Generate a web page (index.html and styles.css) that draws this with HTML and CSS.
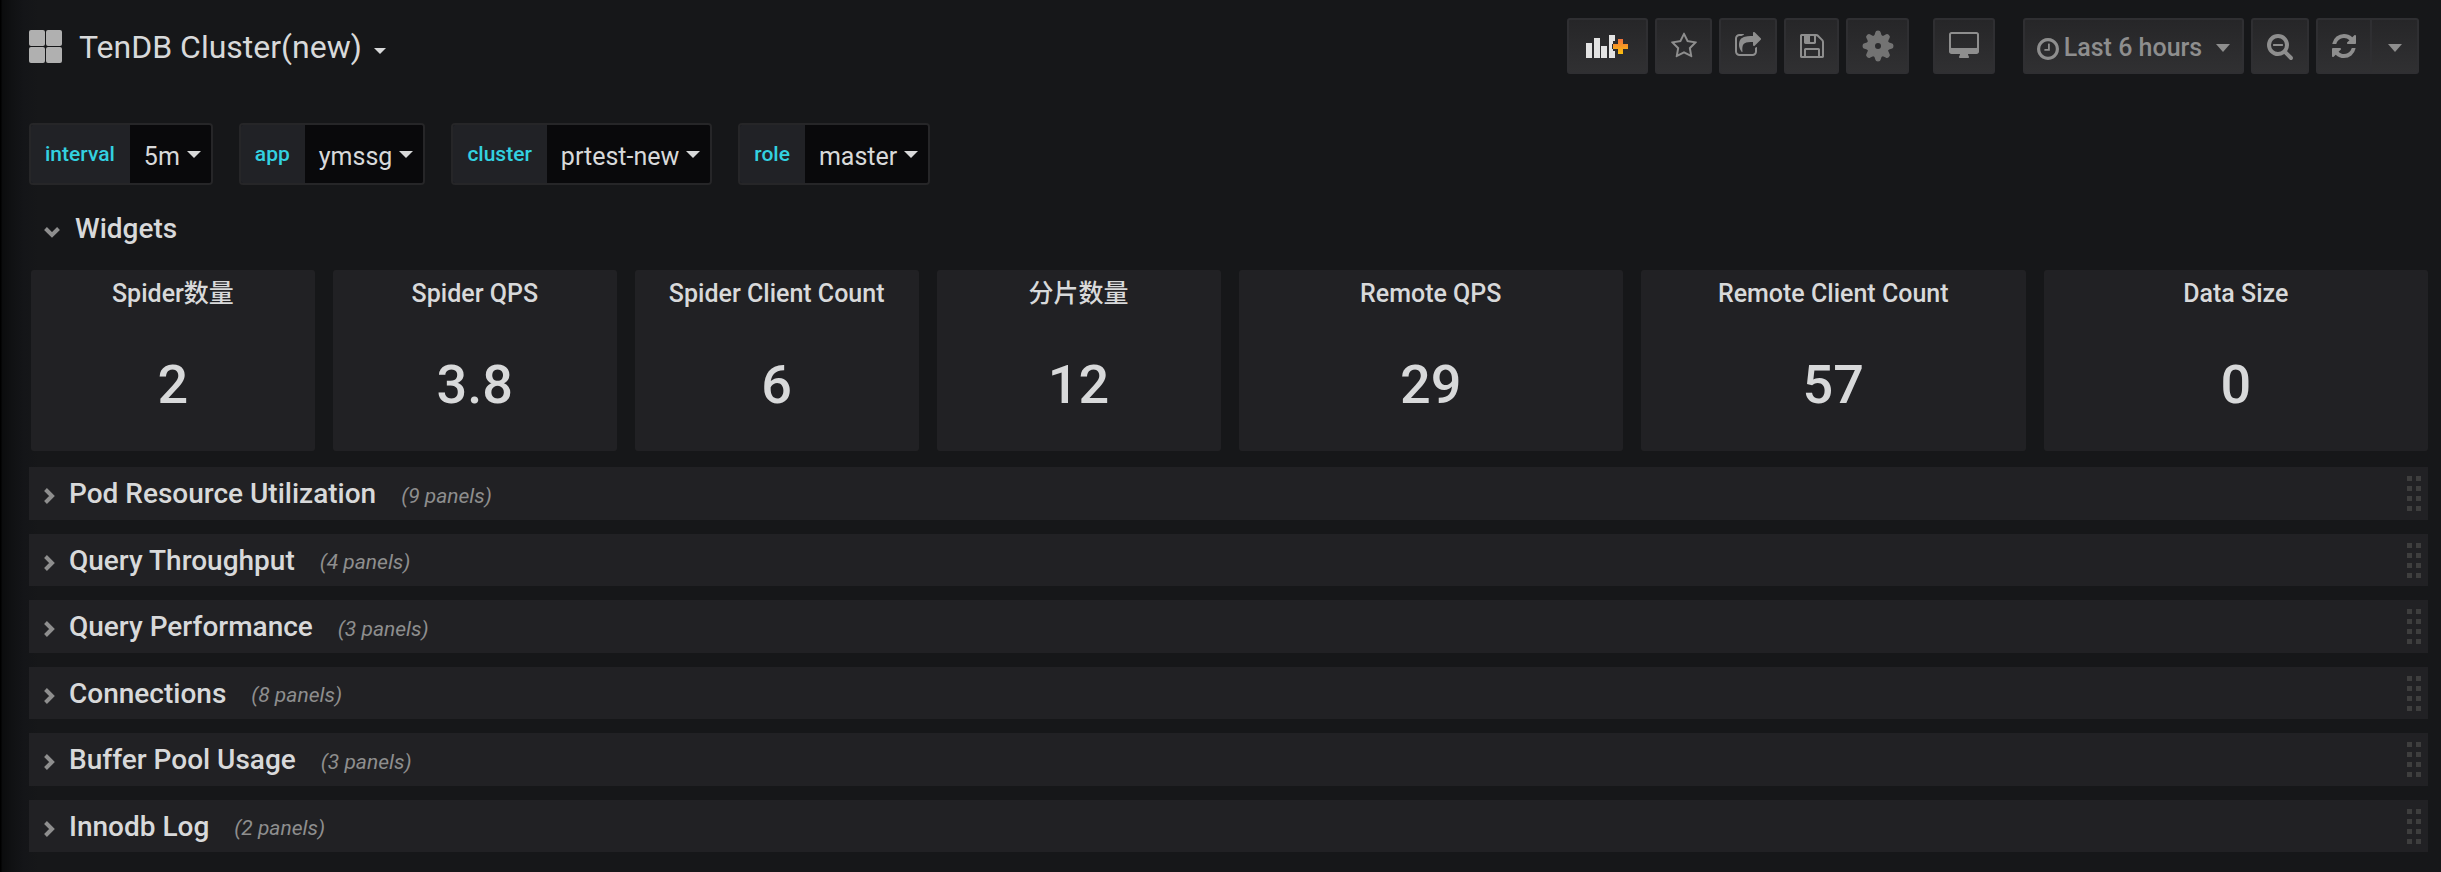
FILE: index.html
```html
<!DOCTYPE html>
<html lang="en">
<head>
<meta charset="utf-8">
<title>TenDB Cluster(new)</title>
<link rel="stylesheet" href="styles.css">
</head>
<body>
<header class="navbar">
  <button class="title-button" type="button">
    <svg class="title-icon" viewBox="0 0 33 33" aria-hidden="true"><g fill="#b0b0b0"><rect width="16" height="16" rx="2"/><rect x="17" width="16" height="16" rx="2"/><rect y="17" width="16" height="16" rx="2"/><rect x="17" y="17" width="16" height="16" rx="2"/></g></svg>
    <span class="title-text">TenDB Cluster(new)</span>
    <span class="caret title-caret"></span>
  </button>
  <div class="toolbar">
    <button class="tool tool-add" type="button" aria-label="Add panel">
      <svg class="icon-add" viewBox="0 0 43 24" aria-hidden="true"><defs><linearGradient id="plus" x1="0" y1="0" x2="0" y2="1"><stop offset="0" stop-color="#f0713a"/><stop offset="1" stop-color="#fbc00f"/></linearGradient></defs><path fill="#e3e3e3" d="M0 9h6v15H0zM8 4h6v20H8zM15 12h6v12h-6zM23 1h6v6h-2v3h-1v5h1v2h2v7h-6z"/><path fill="url(#plus)" d="M32 5h5v5h5v5h-5v5h-5v-5h-5v-5h5z"/></svg>
    </button>
    <button class="tool tool-star" type="button" aria-label="Mark as favorite">
      <svg class="icon" viewBox="0 0 1792 1792" aria-hidden="true"><path d="M1201 1004l306-297-422-62-189-382-189 382-422 62 306 297-73 421 378-199 377 199zm527-357q0 22-26 48l-363 354 86 500q1 7 1 20 0 50-41 50-19 0-40-12l-449-236-449 236q-22 12-40 12-21 0-31.500-14.500t-10.500-35.500q0-6 2-20l86-500-364-354q-25-27-25-48 0-37 56-46l502-73 225-455q19-41 49-41t49 41l225 455 502 73q56 9 56 46z"/></svg>
    </button>
    <button class="tool tool-share" type="button" aria-label="Share dashboard">
      <svg class="icon" viewBox="0 0 1792 1792" aria-hidden="true"><path d="M1472 989v259q0 119-84.500 203.500t-203.500 84.500h-832q-119 0-203.500-84.500t-84.500-203.500v-832q0-119 84.500-203.500t203.500-84.500h255q13 0 22.500 9.500t9.500 22.500q0 27-26 32-77 26-133 60-10 4-16 4h-112q-66 0-113 47t-47 113v832q0 66 47 113t113 47h832q66 0 113-47t47-113v-214q0-19 18-29 28-13 54-37 16-16 35-8 21 9 21 29zm237-496l-384 384q-18 19-45 19-12 0-25-5-39-17-39-59v-192h-160q-323 0-438 131-119 137-74 473 3 23-20 34-8 2-12 2-16 0-26-13-10-14-21-31t-39.500-68.500-49.500-99.500-38.500-114-17.500-122q0-49 3.500-91t14-90 28-88 47-81.500 68.500-74 94.500-61.500 124.500-48.500 159.500-30.500 196.500-11h160v-192q0-42 39-59 13-5 25-5 26 0 45 19l384 384q19 19 19 45t-19 45z"/></svg>
    </button>
    <button class="tool tool-save" type="button" aria-label="Save dashboard">
      <svg class="icon" viewBox="0 0 1792 1792" aria-hidden="true"><path d="M512 1536h768v-384h-768v384zm896 0h128v-896q0-14-10-38.500t-20-34.500l-281-281q-10-10-34-20t-39-10v416q0 40-28 68t-68 28h-576q-40 0-68-28t-28-68v-416h-128v1280h128v-416q0-40 28-68t68-28h832q40 0 68 28t28 68v416zm-384-928v-320q0-13-9.500-22.500t-22.500-9.500h-192q-13 0-22.500 9.500t-9.500 22.500v320q0 13 9.500 22.500t22.500 9.500h192q13 0 22.500-9.500t9.500-22.500zm640 32v928q0 40-28 68t-68 28h-1344q-40 0-68-28t-28-68v-1344q0-40 28-68t68-28h928q40 0 88 20t76 48l280 280q28 28 48 76t20 88z"/></svg>
    </button>
    <button class="tool tool-settings" type="button" aria-label="Dashboard settings">
      <svg class="icon-gear" viewBox="-16 -16 32 32" aria-hidden="true"><defs><path id="tooth" d="M-5-9Q-3-11-2.700-13.500Q-2.500-15.500 0-15.500T2.700-13.500Q3-11 5-9z"/></defs><path fill-rule="evenodd" d="M0-11A11 11 0 0 1 0 11A11 11 0 0 1 0-11zM0-3A3 3 0 0 0 0 3A3 3 0 0 0 0-3z"/><use href="#tooth"/><use href="#tooth" transform="rotate(45)"/><use href="#tooth" transform="rotate(90)"/><use href="#tooth" transform="rotate(135)"/><use href="#tooth" transform="rotate(180)"/><use href="#tooth" transform="rotate(225)"/><use href="#tooth" transform="rotate(270)"/><use href="#tooth" transform="rotate(315)"/></svg>
    </button>
    <button class="tool tool-tv" type="button" aria-label="Cycle view mode">
      <svg class="icon-desktop" viewBox="-64 0 1920 1792" aria-hidden="true"><path d="M1728 992v-832q0-13-9.500-22.500t-22.500-9.500h-1600q-13 0-22.500 9.500t-9.500 22.500v832q0 13 9.500 22.500t22.500 9.500h1600q13 0 22.500-9.500t9.500-22.500zm128-832v1088q0 66-47 113t-113 47h-544q0 37 16 77.500t32 71 16 43.500q0 26-19 45t-45 19h-512q-26 0-45-19t-19-45q0-14 16-44t32-70 16-78h-544q-66 0-113-47t-47-113v-1088q0-66 47-113t113-47h1600q66 0 113 47t47 113z"/></svg>
    </button>
    <button class="tool tool-time" type="button">
      <svg class="icon-clock" viewBox="128 128 1536 1536" aria-hidden="true"><path d="M1024 544v448q0 14-9 23t-23 9h-320q-14 0-23-9t-9-23v-64q0-14 9-23t23-9h224v-352q0-14 9-23t23-9h64q14 0 23 9t9 23zm416 352q0-148-73-273t-198-198-273-73-273 73-198 198-73 273 73 273 198 198 273 73 273-73 198-198 73-273zm224 0q0 209-103 385.500t-279.500 279.500-385.500 103-385.500-103-279.500-279.500-103-385.500 103-385.500 279.500-279.500 385.500-103 385.500 103 279.500 279.500 103 385.500z"/></svg>
      <span class="time-text">Last 6 hours</span>
      <span class="caret tool-caret"></span>
    </button>
    <button class="tool tool-zoom" type="button" aria-label="Zoom out time range">
      <svg class="icon" viewBox="0 0 1792 1792" aria-hidden="true"><path d="M1088 800v64q0 13-9.500 22.500t-22.500 9.500h-576q-13 0-22.500-9.500t-9.500-22.500v-64q0-13 9.500-22.500t22.500-9.500h576q13 0 22.500 9.500t9.500 22.500zm128 32q0-185-131.500-316.500t-316.500-131.500-316.500 131.500-131.500 316.500 131.500 316.500 316.500 131.500 316.500-131.500 131.500-316.500zm512 832q0 53-37.500 90.500t-90.500 37.500q-54 0-90-38l-343-342q-179 124-399 124-143 0-273.500-55.500t-225-150-150-225-55.500-273.500 55.500-273.500 150-225 225-150 273.500-55.500 273.500 55.500 225 150 150 225 55.500 273.500q0 220-124 399l343 343q37 37 37 90z"/></svg>
    </button>
    <div class="tool-group">
      <button class="tool tool-refresh" type="button" aria-label="Refresh">
        <svg class="icon" viewBox="0 0 1792 1792" aria-hidden="true"><path d="M1639 1056q0 5-1 7-64 268-268 434.500t-478 166.500q-146 0-282.500-55t-243.500-157l-129 129q-19 19-45 19t-45-19-19-45v-448q0-26 19-45t45-19h448q26 0 45 19t19 45-19 45l-137 137q71 66 161 102t187 36q134 0 250-65t186-179q11-17 53-117 8-23 30-23h192q13 0 22.500 9.500t9.500 22.500zm25-800v448q0 26-19 45t-45 19h-448q-26 0-45-19t-19-45 19-45l138-138q-148-137-349-137-134 0-250 65t-186 179q-11 17-53 117-8 23-30 23h-199q-13 0-22.500-9.500t-9.500-22.500v-7q65-268 270-434.500t480-166.500q146 0 284 55.500t245 156.500l130-129q19-19 45-19t45 19 19 45z"/></svg>
      </button>
      <button class="tool tool-rate" type="button" aria-label="Refresh interval"><span class="caret tool-caret"></span></button>
    </div>
  </div>
</header>

<main class="dashboard">
  <div class="variables">
    <div class="variable"><span class="variable-label" id="v1">interval</span><button class="variable-value" type="button" aria-labelledby="v1 v1v"><span id="v1v">5m</span><span class="caret"></span></button></div>
    <div class="variable"><span class="variable-label" id="v2">app</span><button class="variable-value" type="button" aria-labelledby="v2 v2v"><span id="v2v">ymssg</span><span class="caret"></span></button></div>
    <div class="variable"><span class="variable-label" id="v3">cluster</span><button class="variable-value" type="button" aria-labelledby="v3 v3v"><span id="v3v">prtest-new</span><span class="caret"></span></button></div>
    <div class="variable"><span class="variable-label" id="v4">role</span><button class="variable-value" type="button" aria-labelledby="v4 v4v"><span id="v4v">master</span><span class="caret"></span></button></div>
  </div>

  <button class="row-open" type="button" aria-expanded="true">
    <svg class="chevron-down" viewBox="0 0 16 11" aria-hidden="true"><path d="M1.500 1.500L8 8L14.500 1.500"/></svg>
    <span>Widgets</span>
  </button>

  <div class="panels">
    <section class="panel"><h2 class="panel-title">Spider数量</h2><div class="panel-value">2</div></section>
    <section class="panel"><h2 class="panel-title">Spider QPS</h2><div class="panel-value">3.8</div></section>
    <section class="panel"><h2 class="panel-title">Spider Client Count</h2><div class="panel-value">6</div></section>
    <section class="panel"><h2 class="panel-title">分片数量</h2><div class="panel-value">12</div></section>
    <section class="panel panel-wide"><h2 class="panel-title">Remote QPS</h2><div class="panel-value">29</div></section>
    <section class="panel panel-wide"><h2 class="panel-title">Remote Client Count</h2><div class="panel-value">57</div></section>
    <section class="panel panel-wide"><h2 class="panel-title">Data Size</h2><div class="panel-value">0</div></section>
  </div>

  <div class="rows">
    <div class="row"><button class="row-toggle" type="button" aria-expanded="false"><svg class="chevron-right" viewBox="0 0 11 16" aria-hidden="true"><path d="M1.500 1.500L8 8L1.500 14.500"/></svg><span class="row-name">Pod Resource Utilization</span><span class="row-count">(9 panels)</span></button><span class="drag"></span></div>
    <div class="row"><button class="row-toggle" type="button" aria-expanded="false"><svg class="chevron-right" viewBox="0 0 11 16" aria-hidden="true"><path d="M1.500 1.500L8 8L1.500 14.500"/></svg><span class="row-name">Query Throughput</span><span class="row-count">(4 panels)</span></button><span class="drag"></span></div>
    <div class="row"><button class="row-toggle" type="button" aria-expanded="false"><svg class="chevron-right" viewBox="0 0 11 16" aria-hidden="true"><path d="M1.500 1.500L8 8L1.500 14.500"/></svg><span class="row-name">Query Performance</span><span class="row-count">(3 panels)</span></button><span class="drag"></span></div>
    <div class="row"><button class="row-toggle" type="button" aria-expanded="false"><svg class="chevron-right" viewBox="0 0 11 16" aria-hidden="true"><path d="M1.500 1.500L8 8L1.500 14.500"/></svg><span class="row-name">Connections</span><span class="row-count">(8 panels)</span></button><span class="drag"></span></div>
    <div class="row"><button class="row-toggle" type="button" aria-expanded="false"><svg class="chevron-right" viewBox="0 0 11 16" aria-hidden="true"><path d="M1.500 1.500L8 8L1.500 14.500"/></svg><span class="row-name">Buffer Pool Usage</span><span class="row-count">(3 panels)</span></button><span class="drag"></span></div>
    <div class="row"><button class="row-toggle" type="button" aria-expanded="false"><svg class="chevron-right" viewBox="0 0 11 16" aria-hidden="true"><path d="M1.500 1.500L8 8L1.500 14.500"/></svg><span class="row-name">Innodb Log</span><span class="row-count">(2 panels)</span></button><span class="drag"></span></div>
  </div>
</main>
</body>
</html>
```
FILE: styles.css
```css
* {
  box-sizing: border-box;
}

html {
  background: #161719;
}

body {
  margin: 0;
  min-height: 100vh;
  color: #d8d9da;
  font-family: Roboto, "Noto Sans CJK SC", sans-serif;
  background: linear-gradient(90deg, #000 1px, #0b0c0d 2px, #101113 12px, #141518 24px, #161719 38px);
}

button {
  margin: 0;
  padding: 0;
  border: 0;
  background: none;
  color: inherit;
  font: inherit;
  cursor: pointer;
}

svg {
  display: block;
  flex: none;
}

.caret {
  flex: none;
  width: 0;
  height: 0;
  border: solid transparent;
  border-width: 7px 7px 0;
  border-top-color: currentColor;
}

/* Navbar */
.navbar {
  display: flex;
  justify-content: space-between;
  align-items: center;
  height: 92px;
  padding: 0 22px 0 29px;
}

.title-button {
  display: flex;
  align-items: center;
}

.title-icon {
  width: 33px;
  height: 33px;
}

.title-text {
  margin-left: 17px;
  padding-top: 1px;
  font-size: 32px;
  line-height: 40px;
}

.title-caret {
  margin: 10px 0 0 12px;
  border-width: 6px 6px 0;
}

.toolbar {
  display: flex;
  gap: 7px;
}

.tool {
  display: flex;
  align-items: center;
  justify-content: center;
  height: 56px;
  color: #8e8e8e;
  fill: #8e8e8e;
  background: linear-gradient(#262628, #303032);
  border: 2px solid #2f2f32;
  border-radius: 3px;
}

.tool-add { width: 81px; }
.tool-star { width: 57px; }
.tool-share { width: 58px; }
.tool-save { width: 55px; }
.tool-settings { width: 63px; fill: #737373; }
.tool-tv { width: 62px; margin-left: 17px; }
.tool-time { width: 221px; margin-left: 21px; }
.tool-zoom { width: 58px; }

.tool-group {
  display: flex;
}

.tool-refresh {
  width: 56px;
  border-radius: 3px 0 0 3px;
}

.tool-rate {
  width: 47px;
  border-left: 0;
  border-radius: 0 3px 3px 0;
}

.icon {
  width: 28px;
  height: 28px;
}

.icon-add {
  width: 43px;
  height: 24px;
}

.icon-gear {
  width: 32px;
  height: 32px;
}

.icon-desktop {
  width: 30px;
  height: 28px;
}

.icon-clock {
  width: 22px;
  height: 22px;
  margin-top: 6px;
}

.time-text {
  margin: 2px 14px 0 5px;
  font-size: 25px;
  font-weight: 500;
}

.tool-caret {
  margin-top: 4px;
  border-width: 8px 7px 0;
}

/* Template variables */
.dashboard {
  padding: 31px 13px 0 29px;
}

.variables {
  display: flex;
  gap: 26px;
}

.variable {
  display: flex;
  height: 62px;
  border: 2px solid #262628;
  border-radius: 4px;
  overflow: hidden;
}

.variable-label {
  padding: 0 15px 0 14px;
  background: #212226;
  color: #33d1e0;
  font-size: 21px;
  font-weight: 500;
  line-height: 58px;
}

.variable-value {
  display: flex;
  align-items: center;
  gap: 7px;
  padding: 4px 10px 0 14px;
  background: #09090b;
  font-size: 25px;
}

.variable-value .caret {
  margin-bottom: 4px;
}

/* Rows and panels */
.row-open {
  display: flex;
  align-items: center;
  gap: 15px;
  height: 52px;
  margin: 17px 0 16px;
  padding: 0 15px;
  font-size: 28px;
  font-weight: 500;
}

.row-open .chevron-down {
  margin-top: 8px;
}

.chevron-down,
.chevron-right {
  fill: none;
  stroke: #8e8e8e;
  stroke-width: 4;
}

.chevron-down {
  width: 16px;
  height: 11px;
}

.chevron-right {
  width: 11px;
  height: 16px;
  margin-top: 5px;
}

.panels {
  display: grid;
  grid-template-columns: repeat(24, 1fr);
  gap: 18px;
  padding-left: 2px;
}

.panel {
  grid-column: span 3;
  height: 181px;
  min-width: 0;
  border-radius: 3px;
  background: #212124;
  text-align: center;
}

.panel-wide {
  grid-column: span 4;
}

.panel-title {
  margin: 0;
  padding-top: 7px;
  font-size: 25px;
  font-weight: 500;
  line-height: 34px;
}

.panel-value {
  margin-top: 40px;
  font-size: 54px;
  font-weight: 500;
  line-height: 68px;
}

.rows {
  display: flex;
  flex-direction: column;
  gap: 14px;
  margin-top: 16px;
  padding-bottom: 16px;
}

.row {
  display: flex;
  justify-content: space-between;
  align-items: center;
  height: 53px;
  padding-right: 7px;
  background: #212124;
}

.row:nth-child(even) {
  height: 52px;
}

.row-toggle {
  display: flex;
  align-items: center;
  flex: 1;
  height: 100%;
  padding-left: 15px;
}

.row-name {
  margin-left: 14px;
  font-size: 28px;
  font-weight: 500;
}

.row-count {
  margin: 4px 0 0 25px;
  color: #8e8e8e;
  font-size: 21px;
  font-style: italic;
}

.drag {
  width: 14px;
  height: 35px;
  background:
    conic-gradient(from 0deg at 5px 5px, #212124 75%, #3e3e3e 0) 0 0 / 9px 10px;
}
```
